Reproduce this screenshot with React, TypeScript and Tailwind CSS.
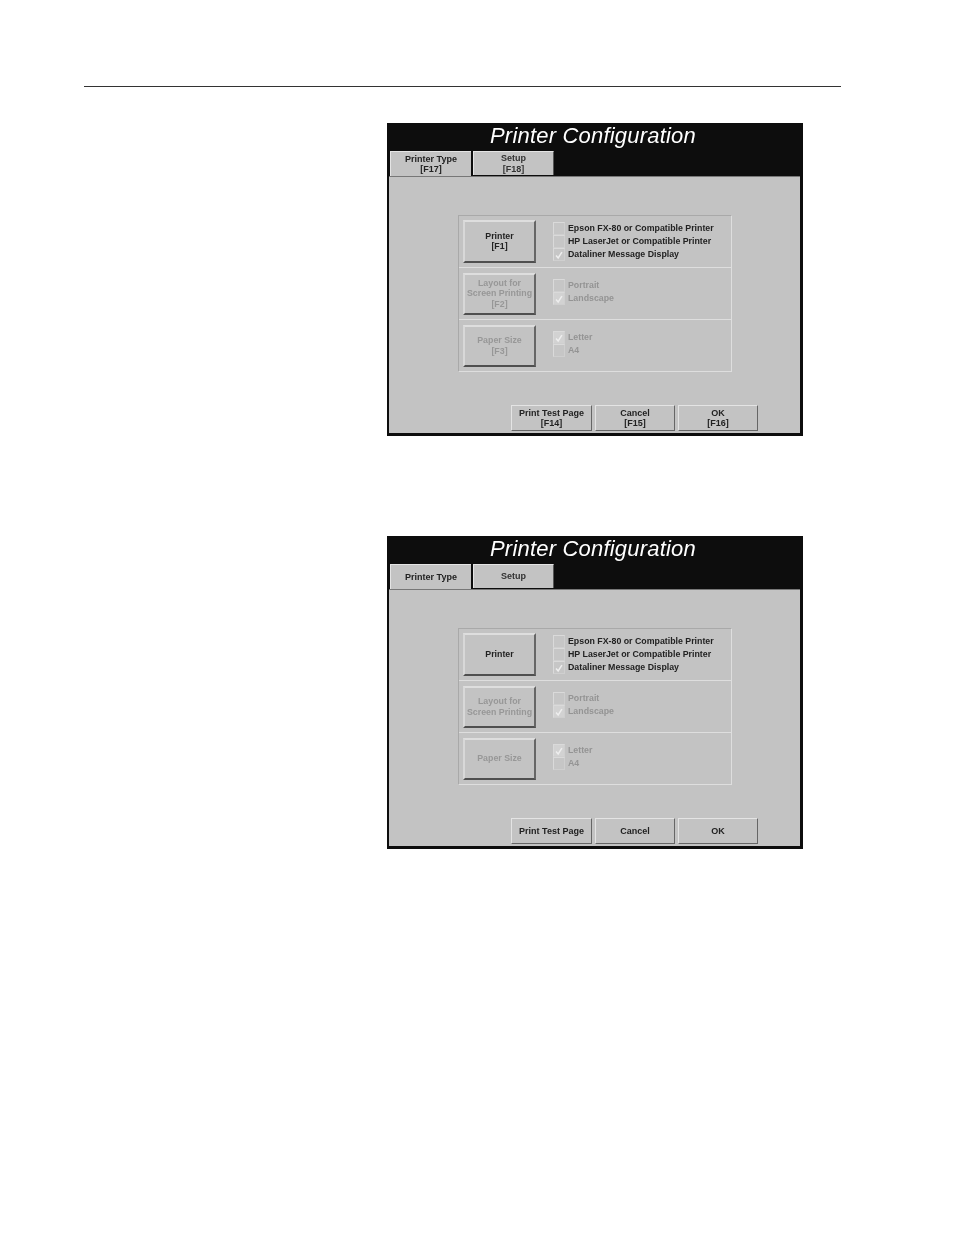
const RAISED = 'border-2 border-t-[#dedede] border-l-[#d8d8d8] border-r-[#666] border-b-[#4f4f4f] bg-[#c3c3c3]'

function Check() {
  return (
    <svg viewBox="0 0 12 12" className="w-[12px] h-[12px]">
      <path d="M2.5 6.5 L5 9.5 L9.5 2.5" fill="none" stroke="#eeeeee" strokeWidth="1.8" />
    </svg>
  )
}

function Option({ label, checked, disabled }: { label: string; checked?: boolean; disabled?: boolean }) {
  return (
    <div className="flex items-center h-[13px]">
      <div className={`w-[12px] h-[13px] flex items-center justify-center border border-t-[#dadada] border-l-[#dadada] border-r-[#cfcfcf] border-b-[#cfcfcf] ${checked && disabled ? 'bg-[#d2d2d2]' : 'bg-[#c6c6c6]'}`}>
        {checked && <Check />}
      </div>
      <span className={`ml-[3px] text-[8.8px] leading-[13px] font-bold whitespace-nowrap ${disabled ? 'text-[#949494]' : 'text-[#222]'}`}>{label}</span>
    </div>
  )
}

function PanelButton({ lines, disabled, height }: { lines: string[]; disabled?: boolean; height: string }) {
  return (
    <div className={`w-[73px] shrink-0 flex flex-col items-center justify-center text-[8.8px] leading-[10.5px] font-bold ${height} ${RAISED} ${disabled ? 'text-[#979797]' : 'text-[#222]'}`}>
      {lines.map(l => <span key={l} className="whitespace-nowrap">{l}</span>)}
    </div>
  )
}

function BottomButton({ lines, width }: { lines: string[]; width: string }) {
  return (
    <div className={`h-[26px] flex flex-col items-center justify-center text-[9px] leading-[10.5px] font-bold text-[#222] border border-t-[#e4e4e4] border-l-[#e4e4e4] border-r-[#666] border-b-[#666] bg-[#c3c3c3] ${width}`}>
      {lines.map(l => <span key={l} className="whitespace-nowrap">{l}</span>)}
    </div>
  )
}

function PrinterWindow({ keys }: { keys: boolean }) {
  const k = (s: string) => (keys ? [s] : [])
  return (
    <div className="w-[416px] h-[313px] ml-[387px] flex flex-col bg-[#0d0d0d] blur-[0.45px]">
      {/* Title */}
      <div className="h-[28px] shrink-0 flex items-center justify-center pr-[4px] pb-[2px]">
        <span className="text-[22px] leading-[26px] italic text-white tracking-[0.2px]">Printer Configuration</span>
      </div>

      {/* Tabs */}
      <div className="h-[25px] shrink-0 flex pl-[3px] gap-[2px]">
        <div className="w-[81px] h-[25px] flex flex-col items-center justify-center text-[9px] leading-[10.5px] font-bold text-[#222] bg-[#c3c3c3] border-t border-l border-t-[#e4e4e4] border-l-[#e4e4e4]">
          <span>Printer Type</span>
          {k('[F17]').map(s => <span key={s}>{s}</span>)}
        </div>
        <div className="w-[81px] h-[24px] flex flex-col items-center justify-center text-[9px] leading-[10.5px] font-bold text-[#333] bg-[#c3c3c3] border-t border-l border-r border-t-[#e4e4e4] border-l-[#e4e4e4] border-r-[#555]">
          <span>Setup</span>
          {k('[F18]').map(s => <span key={s}>{s}</span>)}
        </div>
      </div>

      {/* Panel */}
      <div className="flex-1 ml-[2px] mb-[3px] mr-[3px] bg-[#c3c3c3] border-t border-t-[#777] flex flex-col pt-[38px] pl-[69px]">
        <div className="w-[274px] h-[157px] border border-t-[#a9a9a9] border-l-[#a9a9a9] border-r-[#dedede] border-b-[#dedede] flex flex-col">
          <div className="h-[51px] flex items-center px-[4px] gap-[17px]">
            <PanelButton height="h-[43px] mb-[1px]" lines={['Printer', ...k('[F1]')]} />
            <div className="flex flex-col">
              <Option label="Epson FX-80 or Compatible Printer" />
              <Option label="HP LaserJet or Compatible Printer" />
              <Option label="Dataliner Message Display" checked />
            </div>
          </div>
          <div className="h-[52px] flex items-center px-[4px] gap-[17px] border-t border-t-[#dedede]">
            <PanelButton height="h-[42px]" disabled lines={['Layout for', 'Screen Printing', ...k('[F2]')]} />
            <div className="flex flex-col mb-[3px]">
              <Option label="Portrait" disabled />
              <Option label="Landscape" checked disabled />
            </div>
          </div>
          <div className="h-[52px] flex items-center px-[4px] gap-[17px] border-t border-t-[#dedede]">
            <PanelButton height="h-[42px]" disabled lines={['Paper Size', ...k('[F3]')]} />
            <div className="flex flex-col mb-[3px]">
              <Option label="Letter" checked disabled />
              <Option label="A4" disabled />
            </div>
          </div>
        </div>

        {/* Bottom buttons */}
        <div className="mt-[33px] ml-[53px] flex gap-[3px]">
          <BottomButton width="w-[81px]" lines={['Print Test Page', ...k('[F14]')]} />
          <BottomButton width="w-[80px]" lines={['Cancel', ...k('[F15]')]} />
          <BottomButton width="w-[80px]" lines={['OK', ...k('[F16]')]} />
        </div>
      </div>
    </div>
  )
}

export default function App() {
  return (
    <div className="w-[954px] h-[1235px] bg-white pt-[86px] font-['Liberation_Sans',Arial,sans-serif] overflow-hidden">
      <div className="ml-[84px] w-[757px] h-px bg-[#333]" />
      <div className="mt-[36px]">
        <PrinterWindow keys />
      </div>
      <div className="mt-[100px]">
        <PrinterWindow keys={false} />
      </div>
    </div>
  )
}
